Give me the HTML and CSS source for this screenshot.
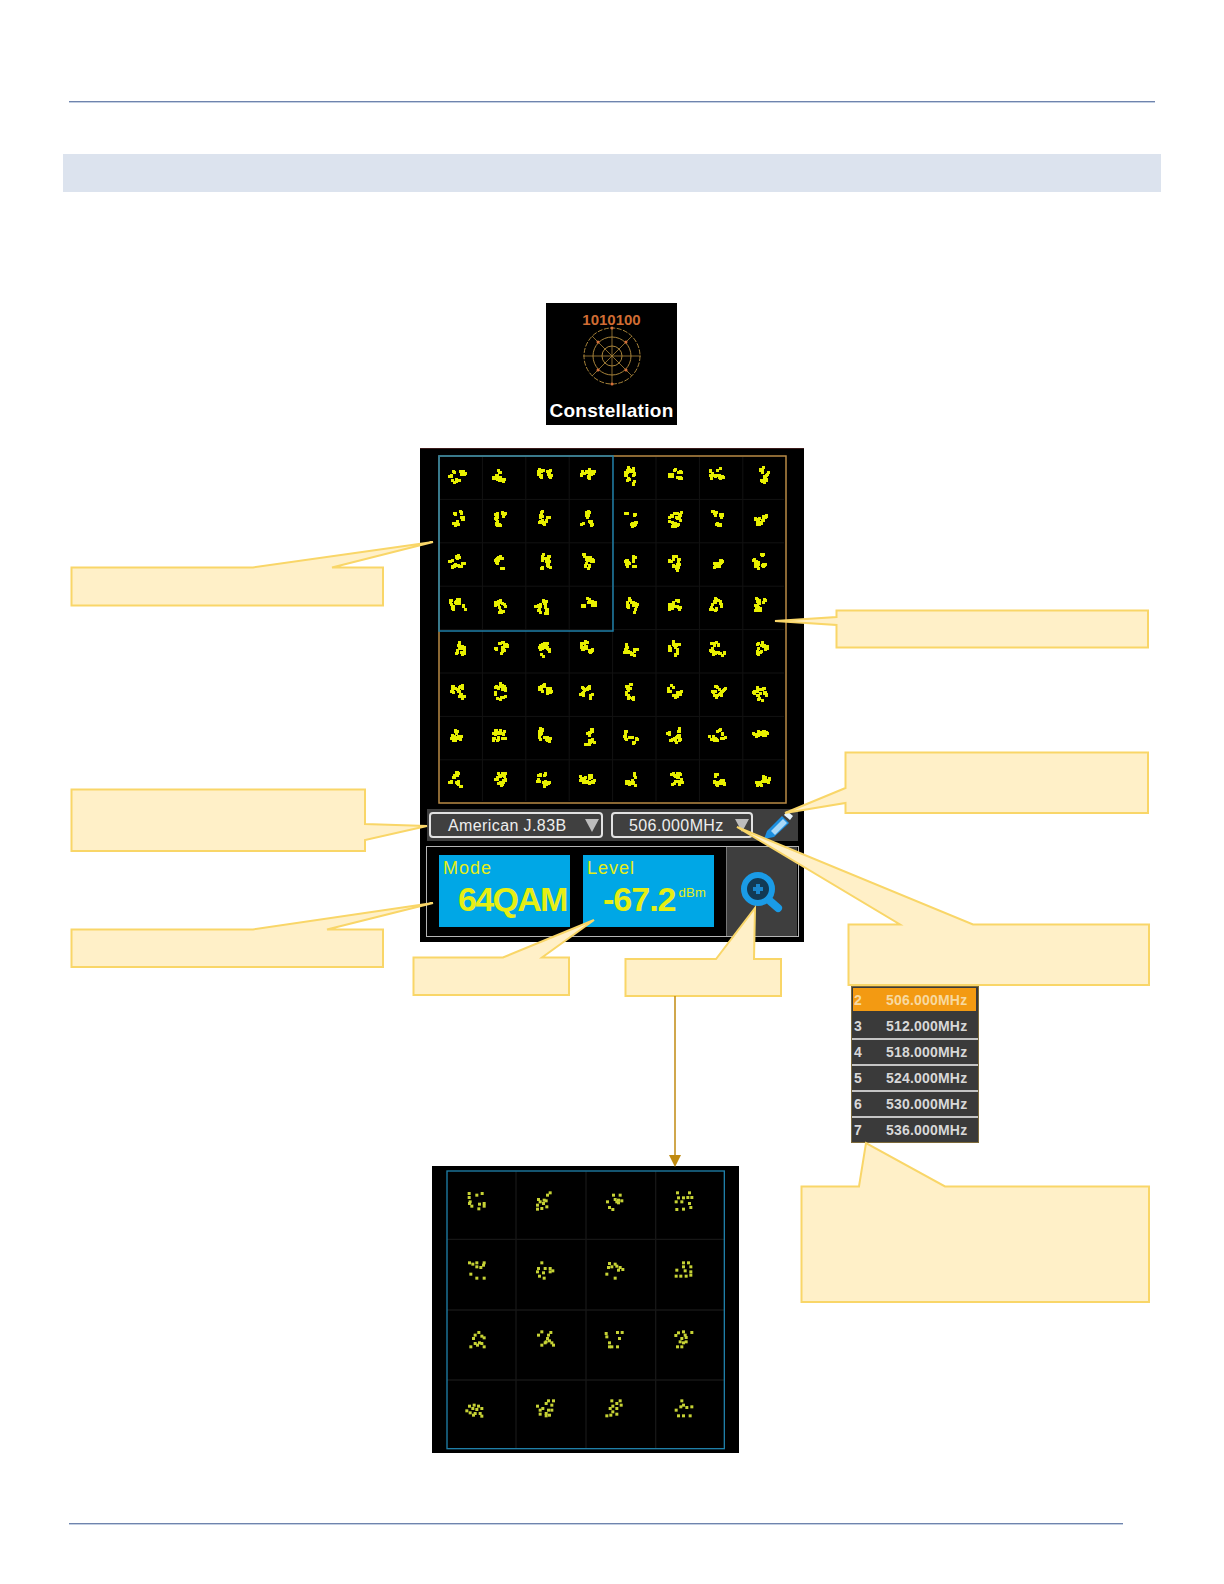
FILE: index.html
```html
<!DOCTYPE html>
<html>
	<head>
		<title>Constellation</title>
		<meta charset="UTF-8" />
		<link rel="stylesheet" href="styles.css">
	</head>
	<body>
		<div id="page">
			<div class="rule rule-top"></div>
			<div class="band"></div>

			<div class="app-icon">
				<div class="app-bits">1010100</div>
				<svg class="app-polar" width="62" height="62" viewBox="-31 -31 62 62">
					<g fill="none" stroke="#a8843a" stroke-width="1">
						<circle r="28" stroke-dasharray="5 1.5" />
						<circle r="19" />
						<circle r="10" />
						<path d="M-29 0H29M0-29V29M-20-20L20 20M-20 20L20-20" stroke-width="0.8" />
					</g>
					<g fill="#d8703a">
						<circle cx="-14" cy="-14" r="1.5" />
						<circle cx="14" cy="-14" r="1.5" />
						<circle cx="-14" cy="14" r="1.5" />
						<circle cx="14" cy="14" r="1.5" />
						<circle cx="0" cy="-28" r="1.5" />
						<circle cx="0" cy="28" r="1.5" />
					</g>
				</svg>
				<div class="app-name">Constellation</div>
			</div>

			<div class="device">
				<svg id="plot" class="plot" width="349" height="350" viewBox="0 0 349 350"></svg>
				<div class="controls">
					<div class="select select-std">American J.83B<span class="caret"></span></div>
					<div class="select select-freq">506.000MHz<span class="caret"></span></div>
					<svg class="pen" width="34" height="30" viewBox="0 0 34 30">
						<path d="M2 29L5 21L20 6L27 13L12 27Z" fill="#1c8fe0" />
						<path d="M9 21L21 9L25 13L13 25Z" fill="#a9d8f7" />
						<path d="M22 5L25 1L31 6L28 10Z" fill="#e8f4fc" />
					</svg>
				</div>
				<div class="readout">
					<div class="tile">
						<div class="tile-name">Mode</div>
						<div class="tile-value tile-mode">64QAM</div>
					</div>
					<div class="tile">
						<div class="tile-name">Level</div>
						<div class="tile-value tile-level">-67.2<span class="tile-unit">dBm</span></div>
					</div>
					<div class="zoom-btn">
						<svg width="48" height="48" viewBox="0 0 48 48">
							<circle cx="20" cy="21" r="12" fill="#123a55" />
							<path d="M20 16V26M15 21H25" stroke="#1a86cc" stroke-width="4" />
							<circle cx="20" cy="21" r="14" fill="none" stroke="#1a9be6" stroke-width="6" />
							<path d="M32 33L40 40" stroke="#1a9be6" stroke-width="8" stroke-linecap="round" />
						</svg>
					</div>
				</div>
			</div>

			<div class="freq-list">
				<div class="freq-row freq-on"><span class="freq-num">2</span>506.000MHz</div>
				<div class="freq-row"><span class="freq-num">3</span>512.000MHz</div>
				<div class="freq-row"><span class="freq-num">4</span>518.000MHz</div>
				<div class="freq-row"><span class="freq-num">5</span>524.000MHz</div>
				<div class="freq-row"><span class="freq-num">6</span>530.000MHz</div>
				<div class="freq-row"><span class="freq-num">7</span>536.000MHz</div>
			</div>

			<svg id="detail" class="detail" width="307" height="287" viewBox="36 48 921 861"></svg>

			<!-- callouts and arrow lie over the screenshots -->
			<svg class="callouts" width="1224" height="1584" viewBox="0 0 1224 1584">
				<g fill="#fff0c8" stroke="#f9d668" stroke-width="2">
					<polygon points="71.5,567.5 253,567.5 433,542 332,567.5 383,567.5 383,605.5 71.5,605.5" />
					<polygon points="71.5,789.5 365,789.5 365,824 427,826 365,840 365,851 71.5,851" />
					<polygon points="71.5,929.5 253,929.5 433,903 327,929.5 383,929.5 383,967 71.5,967" />
					<polygon points="836.5,610.5 1148,610.5 1148,647.5 836.5,647.5 836.5,625 775,621 836.5,617" />
					<polygon points="845.5,752.5 1148,752.5 1148,813 845.5,813 845.5,803 785,813 845.5,788" />
					<polygon points="413.5,957.5 503,957.5 594,920 542,957.5 569,957.5 569,995 413.5,995" />
					<polygon points="625.5,959 716,959 755,908 754,959 781,959 781,996 625.5,996" />
					<polygon points="848.5,924.5 900,924.5 737,827 973,924.5 1149,924.5 1149,985 848.5,985" />
					<polygon points="801.5,1186.5 859,1186.5 866,1143 945,1186.5 1149,1186.5 1149,1302 801.5,1302" />
				</g>
				<path d="M675 996V1156" stroke="#c08a10" stroke-width="1.5" />
				<path d="M669 1155H681L675 1167Z" fill="#c08a10" />
			</svg>

			<div class="rule rule-bottom"></div>
		</div>
		<script src="app.js"></script>
	</body>
</html>
```

FILE: styles.css
```css
body {
	margin: 0;
	background: #fff;
	font-family: "Liberation Sans", Arial, sans-serif;
}

#page {
	position: relative;
	width: 1224px;
	height: 1584px;
	overflow: hidden;
	padding-top: 101px;
	box-sizing: border-box;
}

.rule {
	height: 1px;
	background: #6f84ad;
	border-bottom: 1px solid #c3cfe2;
	margin-left: 69px;
}

.rule-top {
	width: 1086px;
}

.rule-bottom {
	width: 1054px;
	margin-top: 581px;
}

.band {
	height: 38px;
	margin: 51px 63px 0;
	background: #dce3ee;
}

.app-icon {
	display: flex;
	flex-direction: column;
	align-items: center;
	width: 131px;
	height: 122px;
	margin: 111px 0 0 546px;
	background: #000;
}

.app-bits {
	margin-top: 9px;
	font-size: 15px;
	line-height: 16px;
	font-weight: bold;
	color: #cf6c33;
}

.app-polar {
	margin-top: -3px;
}

.app-name {
	margin-top: 12px;
	font-size: 19px;
	line-height: 24px;
	font-weight: bold;
	letter-spacing: 0.3px;
	color: #fff;
}

.device {
	width: 384px;
	height: 494px;
	margin: 23px auto 0;
	padding-top: 6px;
	box-sizing: border-box;
	background: #000;
	border-top: 1px solid #3a1a1a;
}

.plot {
	display: block;
	margin-left: 18px;
}

.controls {
	display: flex;
	align-items: center;
	width: 371px;
	height: 32px;
	margin: 4px 0 0 7px;
	padding-left: 2px;
	box-sizing: border-box;
	background: #3e3e3e;
}

.select {
	position: relative;
	height: 26px;
	box-sizing: border-box;
	border: 2px solid #e2e2e2;
	border-radius: 4px;
	background: #404040;
	font-size: 16px;
	line-height: 24px;
	letter-spacing: 0.4px;
	color: #eee;
}

.select-std {
	width: 174px;
	padding-left: 17px;
}

.select-freq {
	width: 142px;
	margin-left: 8px;
	padding-left: 16px;
}

.caret {
	position: absolute;
	right: 2px;
	top: 5px;
	border-top: 13px solid #bdbdbd;
	border-left: 7px solid transparent;
	border-right: 7px solid transparent;
}

.pen {
	margin-left: 9px;
}

.readout {
	display: flex;
	width: 373px;
	height: 91px;
	margin: 5px 0 0 6px;
	box-sizing: border-box;
	border: 1px solid #b5b5b5;
}

.tile {
	width: 131px;
	height: 72px;
	margin: 8px 0 0 12px;
	background: #00a7e6;
	color: #e6ee14;
}

.tile + .tile {
	margin-left: 13px;
}

.tile-name {
	padding: 3px 0 0 4px;
	font-size: 18px;
	line-height: 20px;
	letter-spacing: 1px;
}

.tile-value {
	margin-top: 2px;
	font-size: 34px;
	line-height: 38px;
	font-weight: bold;
}

.tile-mode {
	padding-left: 19px;
	letter-spacing: -1.7px;
}

.tile-level {
	padding-left: 20px;
	letter-spacing: -1px;
	white-space: nowrap;
}

.tile-unit {
	margin-left: 3px;
	font-size: 13px;
	font-weight: normal;
	letter-spacing: 0.3px;
	vertical-align: 14px;
	line-height: 0;
}

.zoom-btn {
	display: flex;
	align-items: center;
	justify-content: center;
	width: 71px;
	margin-left: 12px;
	box-sizing: border-box;
	border-left: 1px solid #777;
	background: #3e3e3e;
}

.freq-list {
	position: absolute;
	left: 851px;
	top: 986px;
	width: 128px;
	height: 157px;
	box-sizing: border-box;
	padding: 2px 1px 0;
	background: #3a3a3a;
	outline: 1px solid #7d6a3a;
	outline-offset: -1px;
	overflow: hidden;
}

.freq-row {
	display: flex;
	height: 26px;
	box-sizing: border-box;
	border-bottom: 2px solid #c4c4c4;
	font-size: 14px;
	font-weight: bold;
	line-height: 25px;
	letter-spacing: 0.2px;
	color: #d8d8d8;
}

.freq-row:last-child {
	border-bottom: none;
}

.freq-num {
	width: 34px;
	padding-left: 2px;
	box-sizing: border-box;
}

.freq-on {
	height: 23px;
	margin: 0 2px 3px 1px;
	border: none;
	background: #f39a12;
	color: #f7d9a0;
	line-height: 24px;
}

.freq-on .freq-num {
	width: 33px;
	padding-left: 1px;
}

.detail {
	position: absolute;
	left: 432px;
	top: 1166px;
	background: #000;
}

.callouts {
	position: absolute;
	left: 0;
	top: 0;
	pointer-events: none;
}
```

FILE: app.js
```js
var NS = "http://www.w3.org/2000/svg";

function add(svg, tag, attrs) {
	var el = document.createElementNS(NS, tag);
	for (var k in attrs) {
		el.setAttribute(k, attrs[k]);
	}
	svg.appendChild(el);
}

// small seeded random so the clusters stay the same on every load
var seed = 7321;
function rnd() {
	seed = (seed * 16807) % 2147483647;
	return seed / 2147483647;
}

function drawPlot() {
	var svg = document.getElementById("plot");
	var step = 43.4;
	for (var i = 1; i < 8; i++) {
		add(svg, "path", { d: "M" + (1 + i * step) + " 2V346M2 " + (1 + i * step) + "H346", stroke: "#121212", "stroke-width": 1 });
	}
	for (var r = 0; r < 8; r++) {
		for (var c = 0; c < 8; c++) {
			var cx = 18 + c * step;
			var cy = 19 + r * step;
			var clumps = 6 + Math.floor(rnd() * 3);
			for (var n = 0; n < clumps; n++) {
				var a = rnd() * 6.28;
				var d = 3 + rnd() * 4;
				var x = cx + Math.cos(a) * d;
				var y = cy + Math.sin(a) * d;
				for (var m = 0; m < 3; m++) {
					add(svg, "rect", {
						x: Math.round(x + rnd() * 4 - 2),
						y: Math.round(y + rnd() * 4 - 2),
						width: 3, height: 3, fill: "#e8f000"
					});
				}
			}
		}
	}
	add(svg, "rect", { x: 1, y: 1, width: 347, height: 347, fill: "none", stroke: "#b98a45", "stroke-width": 1.5 });
	add(svg, "rect", { x: 1, y: 1, width: 174, height: 175, fill: "none", stroke: "#1f7fa8", "stroke-width": 1.5 });
}

// dot positions read off the enlarged view, row by row
var detailDots = [
	[147,130,170,135,186,130,147,142,150,155,155,168,148,160,178,162,192,160,192,168,176,176],
	[390,128,382,135,372,150,355,148,360,155,378,152,352,165,352,177,365,175,380,170,370,160],
	[580,135,600,135,562,155,585,148,595,150,605,152,595,158,590,155,568,172,578,178],
	[772,128,808,128,775,143,790,143,803,142,815,142,768,155,785,155,808,160,812,172,770,178,790,177],
	[148,338,158,342,170,338,192,338,170,350,182,352,190,345,152,372,170,384,192,384],
	[365,338,355,355,375,355,390,355,398,362,352,365,370,368,390,365,358,378,372,384],
	[568,340,585,342,575,350,590,348,600,352,608,358,565,352,595,360,560,372,585,384],
	[790,338,805,338,790,350,812,350,770,360,795,362,812,365,768,378,782,378,798,378,812,375],
	[176,547,165,555,185,558,192,563,160,565,165,580,178,578,185,580,152,590,172,585,192,590],
	[365,545,392,547,355,555,385,555,382,565,388,572,378,575,395,578,375,578,365,585,400,585],
	[558,550,592,547,606,547,560,560,598,565,568,578,575,590,568,590,592,590],
	[790,545,775,548,815,547,767,556,795,555,798,562,785,565,780,575,798,575,772,590,785,590,790,578],
	[148,768,162,765,175,768,185,775,158,775,170,778,140,782,150,788,165,790,180,790,160,795,185,798],
	[385,752,400,752,378,760,352,768,395,765,368,775,360,780,385,780,395,780,378,790,360,792,378,797,388,795],
	[575,752,600,752,590,760,603,765,578,768,570,775,590,775,578,785,590,792,560,797,572,795],
	[785,752,790,765,782,770,800,772,815,770,768,780,775,797,790,797,810,797]
];

function drawDetail() {
	var svg = document.getElementById("detail");
	add(svg, "path", {
		d: "M288 64V895M498 64V895M707 64V895M81 268H913M81 480H913M81 690H913",
		stroke: "#161616", "stroke-width": 4
	});
	add(svg, "rect", { x: 81, y: 63, width: 832, height: 833, fill: "none", stroke: "#1f7fa8", "stroke-width": 4 });
	detailDots.forEach(function(dots) {
		for (var i = 0; i < dots.length; i += 2) {
			add(svg, "rect", { x: dots[i] - 4, y: dots[i + 1] - 4, width: 9, height: 9, fill: "#c6d235" });
		}
	});
}

drawPlot();
drawDetail();
```
